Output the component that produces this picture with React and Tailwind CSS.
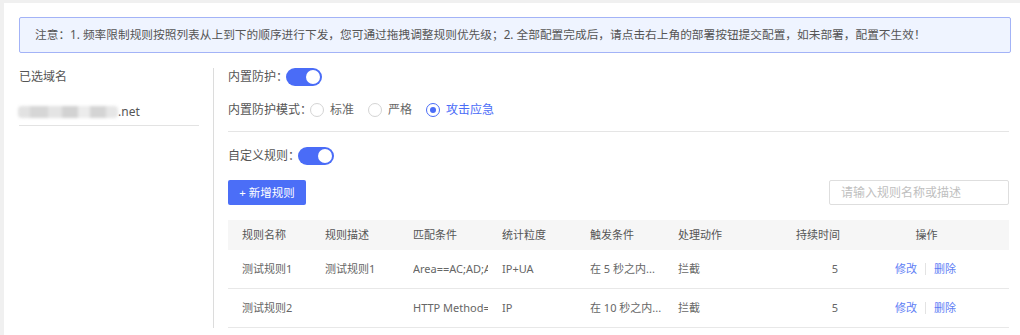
import React from "react";

const font = { fontFamily: '"Noto Sans", "Noto Sans CJK SC", sans-serif' };

function Toggle() {
  return (
    <span className="relative inline-block w-[36px] h-[18px] rounded-full bg-[#4a6cf7] -ml-[2px]">
      <span className="absolute right-[2px] top-[2px] w-[14px] h-[14px] rounded-full bg-white" />
    </span>
  );
}

function Radio({ label, checked }) {
  return (
    <label className="flex items-center mr-[14px]">
      <span
        className={
          "w-[14px] h-[14px] rounded-full border flex items-center justify-center bg-white " +
          (checked ? "border-[#4a6cf7]" : "border-[#d4d4d4]")
        }
      >
        {checked && <span className="w-[6px] h-[6px] rounded-full bg-[#4a6cf7]" />}
      </span>
      <span className={"ml-[6px] " + (checked ? "text-[#4a6cf7]" : "text-[#666]")}>{label}</span>
    </label>
  );
}

const cols = "grid grid-cols-[83px_88px_89px_88px_88px_88px_100px_1fr]";

const rows = [
  { name: "测试规则1", desc: "测试规则1", match: "Area==AC;AD;AE;AF", gran: "IP+UA", trig: "在 5 秒之内...", act: "拦截", dur: "5" },
  { name: "测试规则2", desc: "", match: "HTTP Method==GET", gran: "IP", trig: "在 10 秒之内...", act: "拦截", dur: "5" },
];

export default function App() {
  return (
    <div className="w-[1020px] h-[335px] bg-[#f0f0f0] pt-[3px] pl-[4px] overflow-hidden" style={font}>
      <div className="bg-white h-full pt-[14px] pl-[15px] pr-[9px]">
        {/* notice */}
        <div className="h-[36px] flex items-center pl-[15px] border border-[#a3b3f7] rounded-[2px] bg-[#eff4ff] text-[11.7px] text-[#555]">
          注意：1. 频率限制规则按照列表从上到下的顺序进行下发，您可通过拖拽调整规则优先级；2. 全部配置完成后，请点击右上角的部署按钮提交配置，如未部署，配置不生效！
        </div>

        <div className="flex mt-[15px]">
          {/* domain list */}
          <div className="w-[180px] text-[12px]">
            <div className="h-[18px] leading-[18px] text-[#555]">已选域名</div>
            <div className="mt-[18px] pb-[5px] border-b border-[#e3e3e3] flex items-center h-[22px]">
              <span className="flex h-[12px] w-[100px] -ml-px blur-[1.5px] rounded-sm overflow-hidden">
                <span className="w-[12px] bg-[#e2e2e2]" />
                <span className="w-[18px] bg-[#d6d6d6]" />
                <span className="w-[14px] bg-[#e4e4e4]" />
                <span className="w-[16px] bg-[#d2d2d2]" />
                <span className="w-[12px] bg-[#ececec]" />
                <span className="w-[16px] bg-[#d4d4d4]" />
                <span className="w-[12px] bg-[#e6e6e6]" />
              </span>
              <span className="text-[#555]">.net</span>
            </div>
          </div>

          <div className="w-px bg-[#dcdcdc] ml-[14px]" />

          {/* settings */}
          <div className="flex-1 ml-[14px] mr-[2px] text-[12px] text-[#555]">
            <div className="flex items-center h-[18px]">
              <span>内置防护：</span>
              <Toggle />
            </div>
            <div className="flex items-center h-[18px] mt-[15px]">
              <span className="-mr-[2px]">内置防护模式：</span>
              <Radio label="标准" />
              <Radio label="严格" />
              <Radio label="攻击应急" checked />
            </div>
            <div className="mt-[12px] border-t border-[#e5e5e5]" />
            <div className="flex items-center h-[18px] mt-[15px]">
              <span>自定义规则：</span>
              <Toggle />
            </div>

            <div className="flex justify-between items-center mt-[15px]">
              <button className="h-[25px] w-[78px] rounded-[2px] bg-[#4b6ef7] text-white text-[11.5px]">
                + 新增规则
              </button>
              <div className="h-[25px] w-[180px] border border-[#dedede] rounded-[2px] flex items-center pl-[11px] text-[#c0c0c0]">
                请输入规则名称或描述
              </div>
            </div>

            {/* table */}
            <div className="mt-[15px] text-[11px]">
              <div className={cols + " h-[30px] items-center bg-[#f6f6f6] text-[#555]"}>
                <div className="pl-[14px]">规则名称</div>
                <div className="pl-[14px]">规则描述</div>
                <div className="pl-[14px]">匹配条件</div>
                <div className="pl-[14px]">统计粒度</div>
                <div className="pl-[14px]">触发条件</div>
                <div className="pl-[14px]">处理动作</div>
                <div className="text-right pr-[12px]">持续时间</div>
                <div className="text-center pr-[8px]">操作</div>
              </div>
              {rows.map((r) => (
                <div key={r.name} className={cols + " h-[39px] items-center border-b border-[#e8e8e8] text-[#666]"}>
                  <div className="pl-[14px]">{r.name}</div>
                  <div className="pl-[14px]">{r.desc}</div>
                  <div className="pl-[14px] overflow-hidden">
                    <span className="block w-[78px] overflow-hidden whitespace-nowrap">{r.match}</span>
                  </div>
                  <div className="pl-[14px]">{r.gran}</div>
                  <div className="pl-[14px] whitespace-nowrap">{r.trig}</div>
                  <div className="pl-[14px]">{r.act}</div>
                  <div className="text-right pr-[14px]">{r.dur}</div>
                  <div className="flex items-center justify-center pr-[10px] text-[#5e7ef5]">
                    <span>修改</span>
                    <span className="mx-[8px] w-px h-[12px] bg-[#e3e3e3]" />
                    <span>删除</span>
                  </div>
                </div>
              ))}
            </div>
          </div>
        </div>
      </div>
    </div>
  );
}
